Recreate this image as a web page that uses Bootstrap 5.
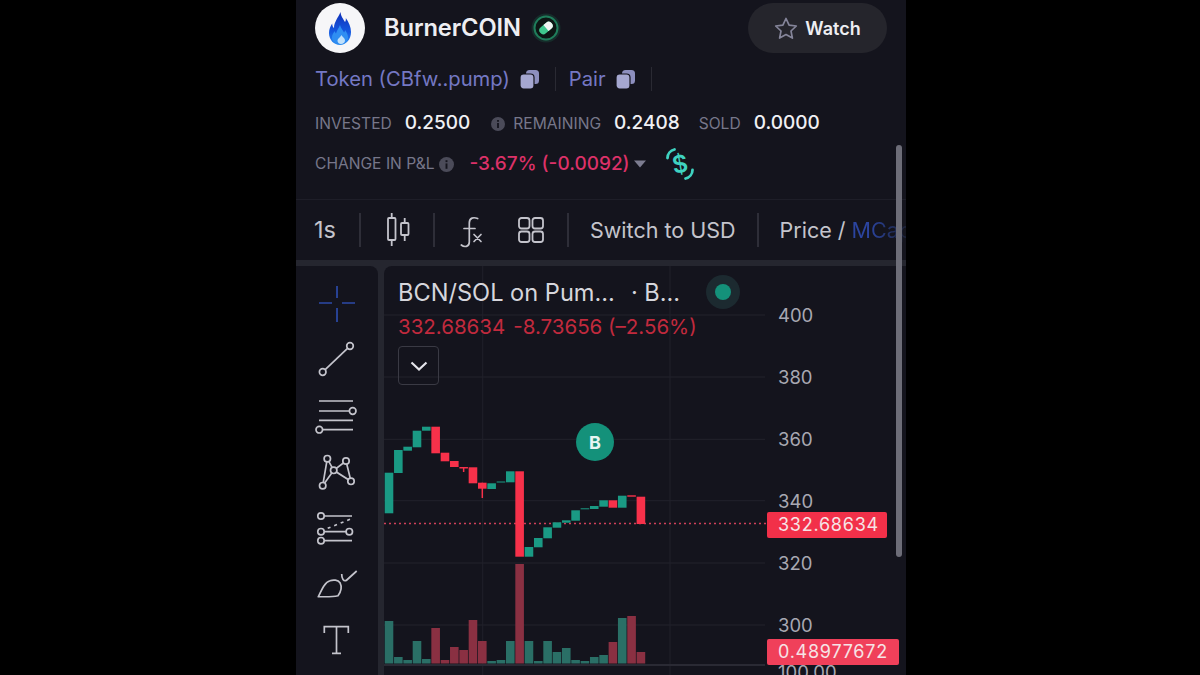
<!DOCTYPE html>
<html lang="en">
<head>
	<meta charset="UTF-8">
	<meta name="viewport" content="width=device-width, initial-scale=1.0">
	<title>BurnerCOIN</title>
	<link href="https://cdn.jsdelivr.net/npm/bootstrap@5.3.0/dist/css/bootstrap.min.css" rel="stylesheet">
	<style>
		html, body { height: 100%; overflow: hidden; }
		body { background: #000; font-family: Inter, "Liberation Sans", sans-serif; }
		svg { overflow: visible; display: block; flex: none; }
		.app-col { width: 610px; height: 675px; margin-left: 2px; background: #14141d; overflow: hidden; position: relative; }
		.info-area { height: 199px; padding: 3px 19px 0 19px; }
		.head-row { height: 50px; }
		.coin-logo { width: 50px; height: 50px; background: #f6f6f8; }
		.coin-name { font-size: 23.7px; font-weight: 600; color: #eeeef2; margin-left: 19px; letter-spacing: -.1px; }
		.pill-badge { margin-left: 12px; }
		.watch-btn { width: 139px; height: 50px; background: #25252c; border-radius: 25px; color: #eeeef2; font-size: 18px; font-weight: 600; gap: 7px; }
		.addr-row { height: 50px; padding-top: 2px; font-size: 20.2px; color: #7478c4; }
		.addr-ico { margin-left: 9px; }
		.addr-sep { width: 1px; height: 24px; background: #2a2a33; margin-left: 15px; }
		.addr-next { margin-left: 13px; }
		.stat-row { height: 38px; padding-top: 3px; font-size: 15.6px; color: #77778a; }
		.stat-row-b { height: 41px; padding-top: 5px; }
		.stat-val { font-size: 19px; font-weight: 500; color: #f0f0f4; margin-left: 13px; }
		.pnl-val { font-size: 19px; font-weight: 500; color: #dc3168; margin-left: 16px; }
		.gap-a { margin-left: 21px; }
		.gap-b { margin-left: 8px; }
		.gap-c { margin-left: 19px; }
		.swap-ico { margin-left: 18px; }
		.bar-row { height: 61px; border-top: 1px solid #1e1e28; padding-left: 18px; font-size: 21.5px; color: #c4c4cc; white-space: nowrap; overflow: hidden; }
		.bar-unit { font-size: 23.5px; }
		.bar-sep { width: 2px; height: 34px; background: #2e2e38; flex: none; margin-left: 23px; }
		.bar-sep-b { margin-left: 21px; }
		.bar-after { margin-left: 25px; }
		.bar-txt { margin-left: 21px; }
		.grid-ico { margin-left: 34px; }
		.mcap-txt { background: linear-gradient(90deg, #2b44a0 30%, #1c2238 90%); -webkit-background-clip: text; background-clip: text; color: transparent; }
		.work-area { height: 415px; background: #25262f; padding-top: 6px; gap: 6px; }
		.tool-col { width: 82px; background: #14141d; border-top-right-radius: 8px; padding-top: 9px; flex: none; }
		.tool-cell { height: 56.2px; flex: none; }
		.chart-pane { flex: 1; background: #14141d; position: relative; border-top-left-radius: 8px; overflow: hidden; }
		.chart-svg { position: absolute; left: 0; top: 0; }
		.chart-legend { position: absolute; left: 14px; top: 10px; width: 370px; }
		.legend-title { font-size: 23.6px; color: #d6d6dc; height: 33px; white-space: nowrap; }
		.legend-vals { font-size: 20.5px; color: #c12a3d; height: 27px; margin-top: 5px; white-space: nowrap; }
		.fold-btn { width: 41px; height: 39px; border: 1px solid #3a3a44; border-radius: 4px; margin-top: 5px; }
		.price-tag { position: absolute; left: 383px; background: #f23049; color: #f6e4e6; font-size: 18px; border-radius: 2px; height: 26px; line-height: 26px; padding-left: 11px; letter-spacing: .75px; }
		.tag-last { top: 246px; width: 120px; }
		.tag-vol { top: 373px; width: 132px; background: #f0405a; }
		.scroll-thumb { position: absolute; left: 600px; top: 145px; width: 6px; height: 412px; border-radius: 3px; background: #6d6d78; }
	</style>
</head>
<body>
	<div class="d-flex justify-content-center">
		<div class="app-col">
			<div class="info-area">
				<div class="head-row d-flex align-items-center">
					<div class="coin-logo rounded-circle d-flex align-items-center justify-content-center">
						<svg width="22" height="33" viewBox="0 0 22 33">
							<defs><linearGradient id="fl" x1="0" y1="0" x2="0" y2="1"><stop offset="0" stop-color="#0f2fb8"/><stop offset=".6" stop-color="#1458e0"/><stop offset="1" stop-color="#2a8cf0"/></linearGradient></defs>
							<path d="M11.500 0c.5 5 3 7 4.500 10 .8-1 1-2.500.8-4 3 4 5.200 9 5.200 14 0 7.500-5 13-11 13S0 28 0 21c0-4 1.500-7 3.200-9.500.1 2 .6 3.500 1.800 4.500C5 10 9 6 11.500 0z" fill="url(#fl)"/>
							<path d="M11 13c.5 3 3 5 4 7.500.8-.8 1-1.500 1-2.500 2 2.500 3 5 3 7.500 0 4-3.500 6.500-8 6.500s-8-2.500-8-6.500c0-3 1.500-5 3-6.500 0 1 .3 2 1 2.500C8 18 10 16 11 13z" fill="#2f8ef2"/>
							<path d="M12.500 23c.5 1.500 3.500 3 3.500 5.500 0 2.300-2 3.500-4 3.500s-3.500-1.200-3.500-3.200c0-2.300 3-3.500 4-5.800z" fill="#bfe0fb"/>
						</svg>
					</div>
					<span class="coin-name">BurnerCOIN</span>
					<svg class="pill-badge" width="26" height="26" viewBox="0 0 26 26">
						<circle cx="13" cy="13" r="14.500" fill="#1d6b50" opacity=".28"/>
						<circle cx="13" cy="13" r="11.500" fill="#0d1614" stroke="#1f7d5b" stroke-width="2"/>
						<g transform="rotate(-40 13 13)">
							<rect x="5.500" y="9" width="15" height="8" rx="4" fill="#3fc88e"/>
							<path d="M13 9h3.500a4 4 0 0 1 0 8H13z" fill="#f2f6f4"/>
						</g>
					</svg>
					<div class="watch-btn ms-auto d-flex align-items-center justify-content-center">
						<svg width="24" height="23" viewBox="0 0 24 23"><path d="M12 1.500l3.100 6.600 7.200.9-5.300 5 1.400 7.100L12 17.600l-6.400 3.500L7 14 1.700 9l7.200-.9z" fill="none" stroke="#85859a" stroke-width="1.700" stroke-linejoin="round"/></svg>
						<span>Watch</span>
					</div>
				</div>
				<div class="addr-row d-flex align-items-center">
					<span>Token (CBfw..pump)</span>
					<svg class="addr-ico" width="21" height="21" viewBox="0 0 21 21"><rect x="7" y="1" width="13" height="14" rx="3.500" fill="#8d8fbe"/><rect x="1" y="5" width="14" height="15" rx="3.500" fill="#a5a7d0" stroke="#14141d" stroke-width="1.200"/></svg>
					<span class="addr-sep"></span>
					<span class="addr-next">Pair</span>
					<svg class="addr-ico" width="21" height="21" viewBox="0 0 21 21"><rect x="7" y="1" width="13" height="14" rx="3.500" fill="#8d8fbe"/><rect x="1" y="5" width="14" height="15" rx="3.500" fill="#a5a7d0" stroke="#14141d" stroke-width="1.200"/></svg>
					<span class="addr-sep"></span>
				</div>
				<div class="stat-row d-flex align-items-center">
					<span>INVESTED</span>
					<span class="stat-val">0.2500</span>
					<svg class="gap-a" width="14" height="14" viewBox="0 0 14 14"><circle cx="7" cy="7" r="7" fill="#4b4b59"/><rect x="6.100" y="6" width="1.800" height="5" fill="#14141d"/><rect x="6.100" y="3" width="1.800" height="1.800" fill="#14141d"/></svg>
					<span class="gap-b">REMAINING</span>
					<span class="stat-val">0.2408</span>
					<span class="gap-c">SOLD</span>
					<span class="stat-val">0.0000</span>
				</div>
				<div class="stat-row stat-row-b d-flex align-items-center">
					<span>CHANGE IN P&amp;L</span>
					<svg class="ms-1" width="15" height="15" viewBox="0 0 14 14"><circle cx="7" cy="7" r="7" fill="#4b4b59"/><rect x="6.100" y="6" width="1.800" height="5" fill="#14141d"/><rect x="6.100" y="3" width="1.800" height="1.800" fill="#14141d"/></svg>
					<span class="pnl-val">-3.67% (-0.0092)</span>
					<svg class="ms-1" width="12" height="8" viewBox="0 0 12 8"><path d="M0 .5h12L6 7.500z" fill="#7c7c90"/></svg>
					<svg class="swap-ico" width="32" height="32" viewBox="0 0 32 32">
						<path d="M3.500 10c0-4 3-7.500 7-8.500M28.500 22c0 4-3 7.500-7 8.500" fill="none" stroke="#3fd2c0" stroke-width="2.800" stroke-linecap="round"/>
						<text x="16" y="24.500" text-anchor="middle" font-size="24" font-weight="600" font-family="Inter, sans-serif" fill="#3fd2c0" transform="rotate(-10 16 16)">$</text>
					</svg>
				</div>
			</div>

			<div class="bar-row d-flex align-items-center">
				<span class="bar-unit">1s</span>
				<span class="bar-sep"></span>
				<svg class="bar-after" width="24" height="34" viewBox="0 0 24 34" fill="none" stroke="#c4c4cc" stroke-width="1.800">
					<rect x="2" y="5" width="7.500" height="22" rx="1"/><path d="M5.700 0v5M5.700 27v6"/>
					<rect x="15" y="10" width="7.500" height="12" rx="1"/><path d="M18.700 5v5M18.700 22v6"/>
				</svg>
				<span class="bar-sep"></span>
				<svg class="bar-after" width="24" height="34" viewBox="0 0 24 34" fill="none" stroke="#c4c4cc" stroke-width="1.700" stroke-linecap="round">
					<path d="M17.700 5.500c-4-1.500-8.400-1-8.400 4.500v19c0 5-5 5.500-8 3"/><path d="M4 15.500h11"/><path d="M14 21.500l7 7M21 21.500l-7 7"/>
				</svg>
				<svg class="grid-ico" width="26" height="26" viewBox="0 0 26 26" fill="none" stroke="#c4c4cc" stroke-width="1.800">
					<rect x="1" y="1" width="10.500" height="10.500" rx="2.500"/><rect x="14.500" y="1" width="10.500" height="10.500" rx="2.500"/>
					<rect x="1" y="14.500" width="10.500" height="10.500" rx="2.500"/><rect x="14.500" y="14.500" width="10.500" height="10.500" rx="2.500"/>
				</svg>
				<span class="bar-sep"></span>
				<span class="bar-txt">Switch to USD</span>
				<span class="bar-sep bar-sep-b"></span>
				<span class="bar-txt">Price / <span class="mcap-txt">MCap</span></span>
			</div>

			<div class="work-area d-flex">
				<div class="tool-col d-flex flex-column align-items-center">
					<!-- drawing tools -->
					<div class="tool-cell d-flex align-items-center justify-content-center">
						<svg width="40" height="40" viewBox="0 0 40 40" stroke="#2c4aa8" stroke-width="1.700" fill="none"><path d="M2 20h13M25 20h13M20 3v12M20 25v14"/></svg>
					</div>
					<div class="tool-cell d-flex align-items-center justify-content-center">
						<svg width="40" height="40" viewBox="0 0 40 40" stroke="#c4c4cc" stroke-width="1.700" fill="none"><circle cx="5.700" cy="33" r="3.300"/><circle cx="33" cy="7" r="3.300"/><path d="M8.200 30.700L30.500 9.300"/></svg>
					</div>
					<div class="tool-cell d-flex align-items-center justify-content-center">
						<svg width="40" height="40" viewBox="0 0 40 40" stroke="#c4c4cc" stroke-width="1.700" fill="none"><path d="M2 6h34M2 16h30M2 25.300h34M6 34.700h30"/><circle cx="35.700" cy="16" r="3.300"/><circle cx="2.300" cy="34.700" r="3.300"/></svg>
					</div>
					<div class="tool-cell d-flex align-items-center justify-content-center">
						<svg width="40" height="40" viewBox="0 0 40 40" stroke="#c4c4cc" stroke-width="1.700" fill="none"><path d="M5.700 33.700L10.300 6.700 16.700 18.300 34 29.300 29 9 16.700 18.300 5.700 33.700"/><circle cx="10.300" cy="6.700" r="3.200" fill="#14141d"/><circle cx="29" cy="9" r="3.200" fill="#14141d"/><circle cx="16.700" cy="18.300" r="3.200" fill="#14141d"/><circle cx="5.700" cy="33.700" r="3.200" fill="#14141d"/><circle cx="34" cy="29.300" r="3.200" fill="#14141d"/></svg>
					</div>
					<div class="tool-cell d-flex align-items-center justify-content-center">
						<svg width="40" height="40" viewBox="0 0 40 40" stroke="#c4c4cc" stroke-width="1.700" fill="none"><path d="M7 8h28M7 23.700h22M7 32.700h28"/><circle cx="4" cy="8" r="3.200"/><circle cx="4" cy="23.700" r="3.200"/><circle cx="32.300" cy="23.700" r="3.200"/><circle cx="4" cy="32.700" r="3.200"/><path d="M10.700 20.300L33 11.300" stroke-dasharray="3 4"/></svg>
					</div>
					<div class="tool-cell d-flex align-items-center justify-content-center">
						<svg width="40" height="40" viewBox="0 0 40 40" stroke="#c4c4cc" stroke-width="1.700" fill="none" stroke-linejoin="round"><path d="M1.300 32.700C5 25 8 18 13 16.700c3-1 8-1 10 2 2 4 1 9-2 13-6 1.500-13 1-19.700 1z"/><path d="M24.700 10c0 5 2 7.500 4.500 6.500L39.700 7"/></svg>
					</div>
					<div class="tool-cell d-flex align-items-center justify-content-center">
						<svg width="40" height="40" viewBox="0 0 40 40" stroke="#c4c4cc" stroke-width="1.700" fill="none"><path d="M7.300 13V6.700h24V13M19.500 6.700v26.600M15 33.300h9"/></svg>
					</div>
				</div>

				<div class="chart-pane">
					<svg class="chart-svg" id="chartSvg" width="522" height="409" viewBox="384 266 522 409"></svg>
					<div class="chart-legend">
						<div class="legend-title d-flex align-items-center"><span>BCN/SOL on Pum...</span><span class="ms-3">· B...</span></div>
						<div class="legend-vals d-flex align-items-center"><span>332.68634</span><span class="ms-2">-8.73656 (–2.56%)</span></div>
						<div class="fold-btn d-flex align-items-center justify-content-center">
							<svg width="18" height="10" viewBox="0 0 18 10" fill="none" stroke="#e4e4ea" stroke-width="2.200"><path d="M1.500 1.500L9 8.500l7.500-7"/></svg>
						</div>
					</div>
					<div class="price-tag tag-last">332.68634</div>
					<div class="price-tag tag-vol">0.48977672</div>
				</div>
			</div>
			<div class="scroll-thumb"></div>
		</div>
	</div>

	<script src="https://cdn.jsdelivr.net/npm/bootstrap@5.3.0/dist/js/bootstrap.bundle.min.js"></script>
	<script>
		// candles: [green?, bodyTop, bodyBottom, wickBottom]
		const candles = [
			[1,472.7,513.3],[1,450,473],[1,446.7,450.7],[1,430.7,447.3],[1,426.7,430.7],[0,426.7,453.3],[0,452.7,461.3],
			[0,461,467],[0,467,468.5,472],[0,467.3,483.3],[0,482.7,488.7,498],[1,483.3,489],[1,481.5,482.5],[1,471.3,482.3],
			[0,471.3,556.7],[1,547,556.7],[1,538,547.3],[1,527.3,538.3],[1,522.3,527.7],[1,520.3,522.7],[1,510.3,520.7],
			[1,508.3,509.3],[1,506,509],[1,500.3,506.7],[0,500.3,507.7],[1,495.7,507.7],[0,495.3,496.7],[0,496.7,524]
		];
		// volume bar tops, in page pixels
		const volTops = [621,657,660,641,659,628,660,647,650,620,641,661,660,641,564,641,661,641,652,648,660,661,657,655,642,618,616,652];
		const redC = '#f7314a', greenC = '#1a9a84';
		let s = '';

		[315,377,439.3,500.7,563,625].forEach(y => { s += `<path d="M384 ${y}H765" stroke="#22222c" stroke-width="1"/>`; });
		[482.7,670].forEach(x => { s += `<path d="M${x} 266V675" stroke="#20202a" stroke-width="1"/>`; });
		s += '<path d="M384 665H765" stroke="#2a2a34" stroke-width="2"/>';
		s += '<path d="M384 523.500H766" stroke="#d0405a" stroke-width="1.500" stroke-dasharray="2 3"/>';

		candles.forEach((c, i) => {
			const x = 389 + i * 9.33;
			const col = c[0] ? greenC : redC;
			if (c[3]) s += `<path d="M${x} ${c[1]}V${c[3]}" stroke="${col}" stroke-width="1.500"/>`;
			s += `<rect x="${x - 4.3}" y="${c[1]}" width="8.600" height="${c[2] - c[1]}" fill="${col}"/>`;
			s += `<rect x="${x - 4.3}" y="${volTops[i]}" width="8.600" height="${663.5 - volTops[i]}" fill="${c[0] ? '#2a6f66' : '#8a3042'}"/>`;
		});

		[[400,322],[380,384],[360,446],[340,508],[320,570],[300,632]].forEach(p => {
			s += `<text x="778" y="${p[1]}" font-family="Inter, sans-serif" font-size="18.500" fill="#a8a8b2">${p[0]}</text>`;
		});
		s += '<text x="778" y="679" font-family="Inter, sans-serif" font-size="18.500" fill="#a8a8b2">100.00</text>';

		s += '<circle cx="595" cy="442" r="19" fill="#14917a"/>';
		s += '<text x="595" y="449" text-anchor="middle" font-family="Inter, sans-serif" font-size="18" font-weight="700" fill="#e6f6f2">B</text>';
		s += '<circle cx="723" cy="292" r="17" fill="#1c2a30"/><circle cx="723" cy="292" r="8" fill="#14917a"/>';

		document.getElementById('chartSvg').innerHTML = s;
	</script>
</body>
</html>
